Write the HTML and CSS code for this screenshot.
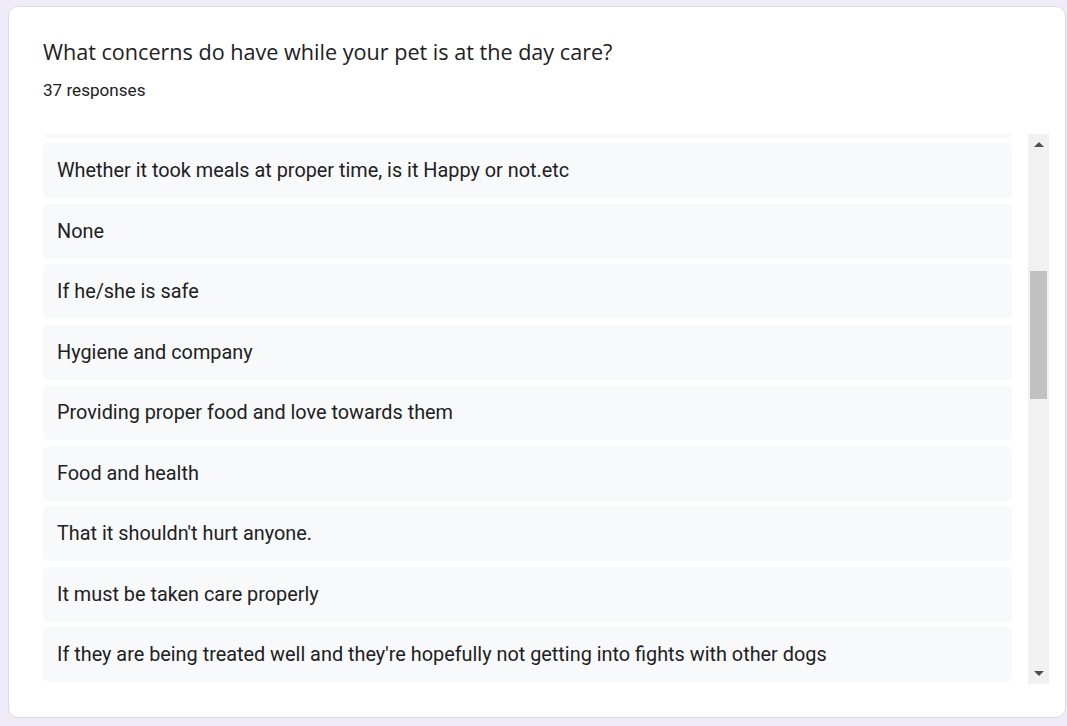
FILE: index.html
```html
<!DOCTYPE html>
<html>
<head>
<meta charset="utf-8">
<link rel="stylesheet" href="styles.css">
</head>
<body>
<div class="card">
  <div class="title">What concerns do have while your pet is at the day care?</div>
  <div class="count">37 responses</div>
  <div class="list-area">
    <div class="viewport">
      <div class="list">
        <div class="item"></div>
        <div class="item">Whether it took meals at proper time, is it Happy or not.etc</div>
        <div class="item">None</div>
        <div class="item">If he/she is safe</div>
        <div class="item">Hygiene and company</div>
        <div class="item">Providing proper food and love towards them</div>
        <div class="item">Food and health</div>
        <div class="item">That it shouldn't hurt anyone.</div>
        <div class="item">It must be taken care properly</div>
        <div class="item">If they are being treated well and they're hopefully not getting into fights with other dogs</div>
      </div>
    </div>
    <div class="scrollbar">
      <div class="arrow up"></div>
      <div class="track"><div class="thumb"></div></div>
      <div class="arrow down"></div>
    </div>
  </div>
</div>
</body>
</html>
```

FILE: styles.css
```css
html, body {
  margin: 0;
  padding: 0;
  background: #f0ebf8;
  height: 100%;
}
body {
  padding: 6px 0 0 8px;
  box-sizing: border-box;
  font-family: Roboto, "Liberation Sans", sans-serif;
  color: #202124;
}
.card {
  background: #fff;
  border: 1px solid #dadce0;
  border-radius: 10px;
  width: 1058px;
  height: 712px;
  box-sizing: border-box;
  padding: 30px 16px 0 34px;
}
.title {
  font-family: "Open Sans", Roboto, sans-serif;
  font-size: 21.6px;
  line-height: 30px;
}
.count {
  font-size: 17.1px;
  line-height: 20px;
  margin-top: 13px;
}
.list-area {
  display: flex;
  margin-top: 34px;
  height: 550px;
}
.viewport {
  flex: 1;
  overflow: hidden;
}
.list {
  margin-top: -51.5px;
}
.item {
  background: #f8f9fa;
  border-radius: 5px;
  height: 55px;
  margin-bottom: 5.5px;
  padding: 0 14px;
  display: flex;
  align-items: center;
  font-size: 19.85px;
  white-space: nowrap;
}
.scrollbar {
  width: 21px;
  background: #f1f1f1;
  display: flex;
  flex-direction: column;
  margin-left: 16px;
}
.arrow {
  height: 21px;
  display: flex;
  align-items: center;
  justify-content: center;
}
.arrow::before {
  content: "";
  width: 0;
  height: 0;
  border-left: 5px solid transparent;
  border-right: 5px solid transparent;
}
.arrow.up::before {
  border-bottom: 5px solid #505050;
}
.arrow.down::before {
  border-top: 5px solid #505050;
}
.track {
  flex: 1;
  padding: 0 2px;
}
.thumb {
  margin-top: 116px;
  height: 128px;
  background: #c1c1c1;
}
```
